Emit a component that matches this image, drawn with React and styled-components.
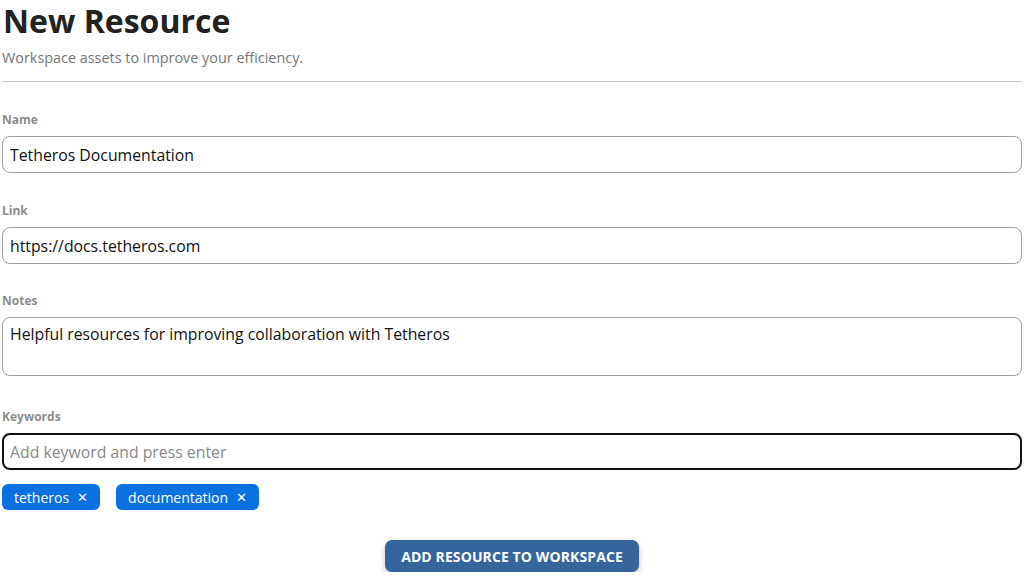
import React, {useState} from 'react';
import styled, {createGlobalStyle} from 'styled-components';

const GlobalStyle = createGlobalStyle`
body{
  margin:0;
  background:#fff;
  font-family:"Open Sans", "Noto Sans", sans-serif;
}
`

const Page = styled.div`
padding:0 8px 0 2px;
display:flex;
flex-direction:column;
`

const Title = styled.h1`
margin:0;
font-size:32px;
line-height:42px;
font-weight:700;
color:#222;
margin-left:1px;
`

const Subtitle = styled.p`
margin:6px 0 0 0;
font-size:14.4px;
line-height:20px;
color:#757575;
`

const Divider = styled.hr`
border:none;
border-top:1px solid #cccccc;
margin:13px 0 0 0;
`

const Form = styled.div`
display:flex;
flex-direction:column;
padding-top:30px;
`

const Field = styled.div`
display:flex;
flex-direction:column;
margin-bottom:${props=>props.spacing ?? 30}px;
`

const Label = styled.label`
font-size:12px;
font-weight:700;
line-height:16px;
color:#8c8c8c;
margin-bottom:8px;
`

const Input = styled.input`
box-sizing:border-box;
height:37px;
width:100%;
border:${props=>props.focused ? '2px solid #111' : '1px solid #9e9e9e'};
border-radius:8px;
padding:0 ${props=>props.focused ? 6 : 7}px;
font-family:inherit;
font-size:15.8px;
color:#111;
outline:none;
&::placeholder{
  color:#888;
}
`

const TextArea = styled.textarea`
box-sizing:border-box;
height:59px;
width:100%;
border:1px solid #9e9e9e;
border-radius:8px;
padding:5px 7px;
font-family:inherit;
font-size:15.8px;
line-height:22px;
color:#111;
resize:none;
outline:none;
`

const Chips = styled.div`
display:flex;
gap:16px;
margin-top:14px;
`

const Chip = styled.span`
display:inline-flex;
align-items:center;
gap:8px;
height:26px;
padding:0 12px 0 12px;
background:#0a72e0;
color:#fff;
border-radius:6px;
font-size:14px;
`

const Close = styled.span`
font-size:13px;
font-weight:300;
line-height:1;
cursor:pointer;
`

const Actions = styled.div`
display:flex;
justify-content:center;
margin-top:30px;
`

const Button = styled.button`
height:32px;
padding:0 16px;
border:none;
border-radius:7px;
background:#35659b;
color:#fff;
font-family:inherit;
font-weight:700;
font-size:14px;
letter-spacing:0.1px;
text-transform:uppercase;
box-shadow:0 3px 6px rgba(0,0,0,0.25);
cursor:pointer;
`

const App = () => {
    const [keywords, setKeywords] = useState(['tetheros', 'documentation']);
    return (
        <Page>
            <GlobalStyle/>
            <Title>New Resource</Title>
            <Subtitle>Workspace assets to improve your efficiency.</Subtitle>
            <Divider/>
            <Form>
                <Field spacing={30}>
                    <Label>Name</Label>
                    <Input defaultValue="Tetheros Documentation"/>
                </Field>
                <Field spacing={29}>
                    <Label>Link</Label>
                    <Input defaultValue="https://docs.tetheros.com"/>
                </Field>
                <Field spacing={33}>
                    <Label>Notes</Label>
                    <TextArea defaultValue="Helpful resources for improving collaboration with Tetheros"/>
                </Field>
                <Field spacing={0}>
                    <Label>Keywords</Label>
                    <Input focused placeholder="Add keyword and press enter"/>
                </Field>
                <Chips>
                    {keywords.map(k=>(
                        <Chip key={k}>{k}<Close onClick={()=>setKeywords(keywords.filter(x=>x!==k))}>✕</Close></Chip>
                    ))}
                </Chips>
                <Actions>
                    <Button>Add resource to workspace</Button>
                </Actions>
            </Form>
        </Page>
    )
};
export default App
